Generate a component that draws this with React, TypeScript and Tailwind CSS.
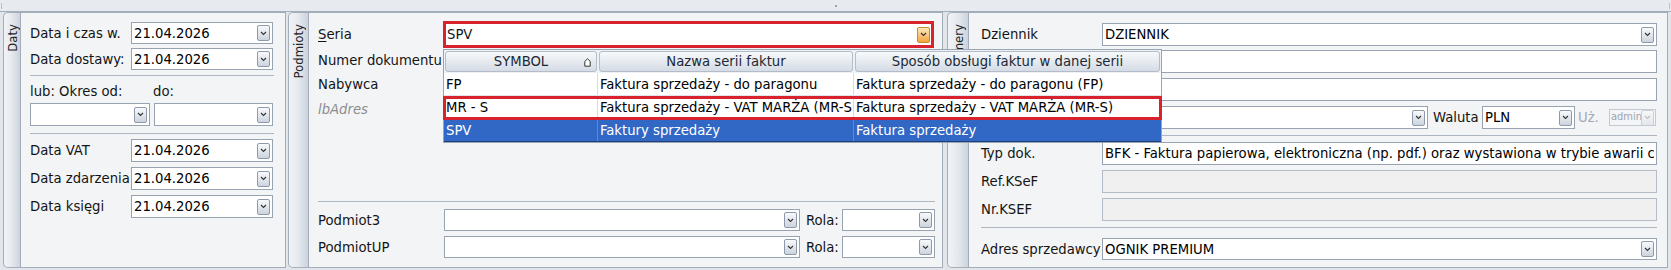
import React from "react";

const font = "font-['DejaVu_Sans_Condensed','DejaVu_Sans',sans-serif]";

function Chevron({ color = "#2f2f2f" }: { color?: string }) {
  return (
    <svg width="7" height="5" viewBox="0 0 7 5">
      <path d="M1 1 L3.5 3.5 L6 1" fill="none" stroke={color} strokeWidth="1.1" />
    </svg>
  );
}

function DropBtn({ orange, disabled }: { orange?: boolean; disabled?: boolean }) {
  const tone = orange
    ? "border-[#c98a2e] bg-gradient-to-b from-[#fde8b8] to-[#f2a53a]"
    : disabled
    ? "border-[#c9d0d8] bg-gradient-to-b from-[#f6f7f9] to-[#e3e7ec]"
    : "border-[#8e9aab] bg-gradient-to-b from-[#f8fafc] to-[#cdd4de]";
  return (
    <div className={`flex h-[16px] w-[13px] shrink-0 items-center justify-center rounded-[2px] border ${tone}`}>
      <Chevron color={disabled ? "#b9c1cb" : "#333"} />
    </div>
  );
}

interface FieldProps {
  className: string;
  value?: string;
  drop?: boolean;
  gray?: boolean;
}

function Field({ className, value, drop, gray }: FieldProps) {
  return (
    <div
      className={`flex shrink-0 items-center overflow-hidden border pl-[2px] pr-[2px] ${
        gray ? "border-[#b3bcc7] bg-[#f0f0f0]" : "border-[#98a3b1] bg-white"
      } ${className}`}
    >
      <span className="min-w-0 flex-1 overflow-hidden whitespace-nowrap text-black">{value}</span>
      {drop && <DropBtn />}
    </div>
  );
}

function Tab({ label, className }: { label: string; className: string }) {
  return (
    <div
      className={`flex shrink-0 flex-col items-center rounded-l-[5px] border-y border-l border-[#a5afbb] bg-gradient-to-r from-[#f1f3f6] via-[#e5e9ee] to-[#ccd3dc] pt-[11px] ${className}`}
    >
      <span className="rotate-180 text-[13px] leading-none text-[#222] [writing-mode:vertical-rl]">
        {label}
      </span>
    </div>
  );
}

function Sep({ className }: { className: string }) {
  return <div className={`h-px shrink-0 bg-[#adb6c1] ${className}`} />;
}

function SortIcon() {
  return (
    <svg width="7" height="9" viewBox="0 0 7 9">
      <path d="M3.5 0.8 L6.2 3.4 L6.2 8.2 L0.8 8.2 L0.8 3.4 Z" fill="white" stroke="#333" strokeWidth="1" />
    </svg>
  );
}

const rows = [
  { sym: "FP", name: "Faktura sprzedaży - do paragonu", mode: "Faktura sprzedaży - do paragonu (FP)" },
  { sym: "MR - S", name: "Faktura sprzedaży - VAT MARŻA (MR-S)", mode: "Faktura sprzedaży - VAT MARŻA (MR-S)" },
  { sym: "SPV", name: "Faktury sprzedaży", mode: "Faktura sprzedaży", selected: true },
];

function SeriesPopup() {
  return (
    <div className="absolute left-[443px] top-[49px] w-[719px] border border-[#9aa5b2] bg-white">
      {/* header */}
      <div className="flex h-[23px] bg-[#eef1f5]">
        <div className="flex w-[154px] p-px">
          <div className="relative flex flex-1 items-center justify-center rounded-[3px] border border-[#b3bcc8] bg-gradient-to-b from-[#f7f9fb] to-[#d5dce5] text-[#1d2835]">
            SYMBOL
            <span className="absolute right-[5px] top-[6px] flex">
              <SortIcon />
            </span>
          </div>
        </div>
        <div className="flex w-[256px] p-px">
          <div className="flex flex-1 items-center justify-center rounded-[3px] border border-[#b3bcc8] bg-gradient-to-b from-[#f7f9fb] to-[#d5dce5] text-[#1d2835]">
            Nazwa serii faktur
          </div>
        </div>
        <div className="flex flex-1 p-px">
          <div className="flex flex-1 items-center justify-center rounded-[3px] border border-[#b3bcc8] bg-gradient-to-b from-[#f7f9fb] to-[#d5dce5] text-[#1d2835]">
            Sposób obsługi faktur w danej serii
          </div>
        </div>
      </div>
      {/* rows */}
      {rows.map((r) => (
        <div
          key={r.sym}
          className={`flex h-[23px] items-center border-b ${
            r.selected ? "border-[#1f3f7a] bg-[#3168c6] text-white" : "border-[#e1e5ea] text-black"
          }`}
        >
          <div className={`flex h-full w-[154px] items-center overflow-hidden whitespace-nowrap border-r pl-[2px] ${r.selected ? "border-[#5f88cf]" : "border-[#d9dde3]"}`}>
            {r.sym}
          </div>
          <div className={`flex h-full w-[256px] items-center overflow-hidden whitespace-nowrap border-r pl-[2px] ${r.selected ? "border-[#5f88cf]" : "border-[#d9dde3]"}`}>
            {r.name}
          </div>
          <div className="flex h-full flex-1 items-center overflow-hidden whitespace-nowrap pl-[2px]">{r.mode}</div>
        </div>
      ))}
      {/* highlight */}
      <div className="absolute left-[-1px] right-[-1px] top-[46px] h-[24px] border-[3px] border-[#d8222e]" />
    </div>
  );
}

export default function App() {
  return (
    <div className={`relative h-[270px] w-[1671px] overflow-hidden bg-[#e2e6eb] text-[14.7px] text-[#141414] ${font}`}>
      {/* top splitter strip */}
      <div className="flex h-[12px] items-center justify-between border-b border-[#a4aebb] bg-[#e7ebf0] px-[1px]">
        <div className="h-[6px] w-[3px] border-l border-[#b7bfc9]" />
        <div className="h-[2px] w-[2px] bg-[#9aa4b0]" />
        <div className="h-[6px] w-[3px] border-r border-[#b7bfc9]" />
      </div>

      <div className="flex h-[256px] pl-[3px]">
        {/* Daty */}
        <Tab label="Daty" className="w-[17px]" />
        <div className="flex w-[266px] shrink-0 flex-col border border-[#a3adb9] bg-[#f3f4f6] pl-[9px] pt-[9px]">
          <div className="flex h-[22px] items-center">
            <span className="w-[101px] shrink-0">Data i czas w.</span>
            <Field className="h-[22px] w-[142px]" value="21.04.2026" drop />
          </div>
          <div className="mt-[4px] flex h-[22px] items-center">
            <span className="w-[101px] shrink-0">Data dostawy:</span>
            <Field className="h-[22px] w-[142px]" value="21.04.2026" drop />
          </div>
          <Sep className="mt-[5px] w-[244px]" />
          <div className="mt-[7px] flex h-[16px] items-center">
            <span className="w-[123px] shrink-0">lub: Okres od:</span>
            <span>do:</span>
          </div>
          <div className="mt-[4px] flex gap-[4px]">
            <Field className="h-[23px] w-[120px]" drop />
            <Field className="h-[23px] w-[119px]" drop />
          </div>
          <Sep className="mt-[7px] w-[244px]" />
          <div className="mt-[5px] flex h-[23px] items-center">
            <span className="w-[101px] shrink-0">Data VAT</span>
            <Field className="h-[23px] w-[142px]" value="21.04.2026" drop />
          </div>
          <div className="mt-[5px] flex h-[23px] items-center">
            <span className="w-[101px] shrink-0 whitespace-nowrap">Data zdarzenia</span>
            <Field className="h-[23px] w-[142px]" value="21.04.2026" drop />
          </div>
          <div className="mt-[5px] flex h-[23px] items-center">
            <span className="w-[101px] shrink-0">Data księgi</span>
            <Field className="h-[23px] w-[142px]" value="21.04.2026" drop />
          </div>
        </div>

        {/* Podmioty */}
        <Tab label="Podmioty" className="ml-[2px] w-[20px]" />
        <div className="flex w-[635px] shrink-0 flex-col border border-[#a3adb9] bg-[#f3f4f6] pb-[9px] pl-[9px] pt-[9px]">
          <div className="flex h-[25px] items-center">
            <span className="w-[126px] shrink-0">
              <span className="underline underline-offset-2">S</span>eria
            </span>
            <div className="relative flex">
              <div className="flex h-[25px] w-[489px] items-center border border-[#98a3b1] bg-white pl-[2px] pr-[2px]">
                <span className="flex-1">SPV</span>
                <DropBtn orange />
              </div>
              <div className="absolute -inset-[1px] border-[3px] border-[#d8222e]" />
            </div>
          </div>
          <div className="mt-[2px] flex h-[23px] items-center">
            <span className="w-[126px] shrink-0">Numer dokumentu</span>
          </div>
          <div className="mt-[1px] flex h-[23px] items-center">
            <span className="w-[126px] shrink-0">Nabywca</span>
          </div>
          <div className="mt-[2px] flex h-[23px] items-center">
            <span className="w-[126px] shrink-0 italic text-[#8d8d8d]">lbAdres</span>
          </div>

          <Sep className="mt-auto w-[617px]" />
          <div className="mt-[7px] flex h-[22px] items-center">
            <span className="w-[126px] shrink-0">Podmiot3</span>
            <Field className="h-[22px] w-[356px]" drop />
            <span className="ml-[6px] w-[36px] shrink-0">Rola:</span>
            <Field className="h-[22px] w-[93px]" drop />
          </div>
          <div className="mt-[5px] flex h-[22px] items-center">
            <span className="w-[126px] shrink-0">PodmiotUP</span>
            <Field className="h-[22px] w-[356px]" drop />
            <span className="ml-[6px] w-[36px] shrink-0">Rola:</span>
            <Field className="h-[22px] w-[93px]" drop />
          </div>
        </div>

        {/* Numery */}
        <Tab label="Numery" className="ml-[4px] w-[21px]" />
        <div className="flex w-[700px] shrink-0 flex-col border border-[#a3adb9] bg-[#f3f4f6] pl-[12px] pt-[10px]">
          <div className="flex h-[23px] items-center">
            <span className="w-[121px] shrink-0">Dziennik</span>
            <Field className="h-[23px] w-[555px]" value="DZIENNIK" drop />
          </div>
          <div className="mt-[4px] flex h-[23px] items-center pl-[121px]">
            <Field className="h-[23px] w-[555px]" />
          </div>
          <div className="mt-[5px] flex h-[23px] items-center pl-[121px]">
            <Field className="h-[23px] w-[555px]" />
          </div>
          <div className="mt-[5px] flex h-[23px] items-center pl-[121px]">
            <Field className="h-[23px] w-[326px]" drop />
            <span className="ml-[5px] w-[49px] shrink-0">Waluta</span>
            <Field className="h-[23px] w-[93px]" value="PLN" drop />
            <span className="ml-[3px] w-[31px] shrink-0 text-[#a1a9b4]">Uż.</span>
            <div className="flex h-[17px] w-[47px] items-center overflow-hidden border border-[#c3cad3] bg-[#f4f5f7] pl-[1px] pr-[1px]">
              <span className="w-[31px] overflow-hidden whitespace-nowrap text-[11px] text-[#9ca5b0]">admin</span>
              <DropBtn disabled />
            </div>
          </div>
          <Sep className="mt-[6px] w-[676px]" />
          <div className="mt-[6px] flex h-[23px] items-center">
            <span className="w-[121px] shrink-0">Typ dok.</span>
            <Field
              className="h-[23px] w-[555px]"
              value="BFK - Faktura papierowa, elektroniczna (np. pdf.) oraz wystawiona w trybie awarii ca"
            />
          </div>
          <div className="mt-[5px] flex h-[23px] items-center">
            <span className="w-[121px] shrink-0">Ref.KSeF</span>
            <Field className="h-[23px] w-[555px]" gray />
          </div>
          <div className="mt-[5px] flex h-[23px] items-center">
            <span className="w-[121px] shrink-0">Nr.KSEF</span>
            <Field className="h-[23px] w-[555px]" gray />
          </div>
          <Sep className="mt-[6px] w-[676px]" />
          <div className="mt-[10px] flex h-[22px] items-center">
            <span className="w-[121px] shrink-0">Adres sprzedawcy</span>
            <Field className="h-[22px] w-[555px]" value="OGNIK PREMIUM" drop />
          </div>
        </div>
      </div>

      <SeriesPopup />
    </div>
  );
}
